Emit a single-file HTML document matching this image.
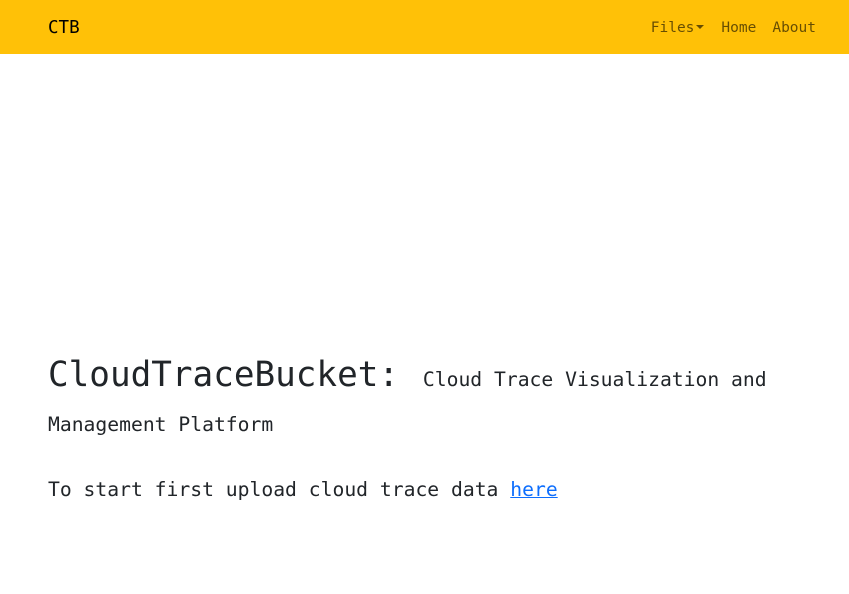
<!DOCTYPE html>
<html><head><style>
body{margin:0;background:#fff;font-family:"DejaVu Sans Mono","Liberation Mono",monospace;color:#212529}
.nav{height:54px;background:#ffc107;position:relative}
.brand{position:absolute;left:48px;top:18px;font-size:17.5px;color:#000}
.links{position:absolute;right:33px;top:20px;font-size:14.5px;color:rgba(0,0,0,.6)}
.links span{margin-left:16px}
.links span:first-child{margin-right:1px}
.caret{display:inline-block;width:0;height:0;border-left:4px solid transparent;border-right:4px solid transparent;border-top:4.5px solid rgba(0,0,0,.6);vertical-align:3px;margin-left:2px}
.h{position:absolute;left:48px;top:353px;width:760px;line-height:45px;font-size:19.7px}
.h b{font-weight:normal;font-size:34.3px;margin-right:12px}
.p{position:absolute;left:48px;top:478px;font-size:19.7px}
a{color:#0d6efd;text-decoration:underline}
</style></head><body>
<div class="nav"><div class="brand">CTB</div>
<div class="links"><span>Files<i class="caret"></i></span><span>Home</span><span>About</span></div></div>
<div class="h"><b>CloudTraceBucket:</b> Cloud Trace Visualization and Management Platform</div>
<div class="p">To start first upload cloud trace data <a>here</a></div>
</body></html>
